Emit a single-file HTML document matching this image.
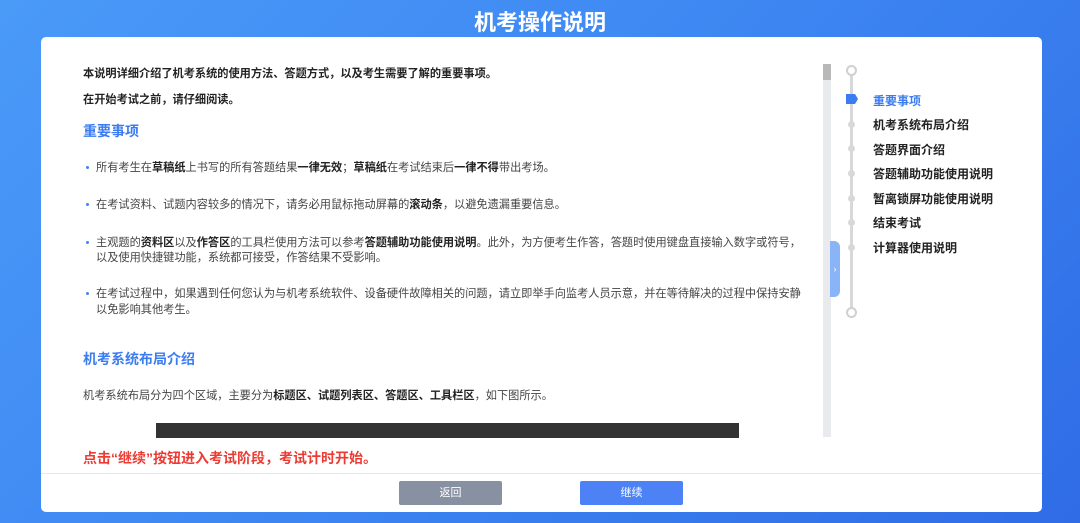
<!DOCTYPE html>
<html><head><meta charset="utf-8"><style>
*{margin:0;padding:0;box-sizing:border-box}
body{width:1080px;height:523px;overflow:hidden;position:relative;font-family:"Liberation Sans","Noto Sans CJK SC",sans-serif;background:linear-gradient(135deg,#4a9af8 0%,#3d86f2 50%,#2f6ce6 100%);}
.title{position:absolute;top:5px;left:0;width:1080px;text-align:center;color:#fff;font-size:22px;font-weight:bold}
.panel{position:absolute;left:41px;top:37px;width:1001px;height:475px;background:#fff;border-radius:5px}
.t{position:absolute;left:42px;font-size:11.2px;color:#444;white-space:nowrap}
.t b{color:#222}
.bd{font-weight:bold;color:#222;font-size:11.2px}
.h{color:#3b7cf0;font-size:14px;font-weight:bold}
.li::before{content:"";position:absolute;left:-10px;top:7px;width:3px;height:3px;border-radius:50%;background:#4a80f5}
.nav{position:absolute;left:832px;font-size:12px;font-weight:bold;color:#222}
.dot{position:absolute;left:807px;width:7px;height:7px;border-radius:50%;background:#d8d8d8}
.btn{position:absolute;top:444px;width:103px;height:24px;color:#fff;font-size:11px;text-align:center;line-height:24px;border-radius:2px}
</style></head><body>
<div class="title">机考操作说明</div>
<div class="panel">
<div class="t bd" style="top:28px">本说明详细介绍了机考系统的使用方法、答题方式，以及考生需要了解的重要事项。</div>
<div class="t bd" style="top:54px">在开始考试之前，请仔细阅读。</div>
<div class="t h" style="top:84px">重要事项</div>
<div class="t li" style="top:122px;left:55px">所有考生在<b>草稿纸</b>上书写的所有答题结果<b>一律无效</b>；<b>草稿纸</b>在考试结束后<b>一律不得</b>带出考场。</div>
<div class="t li" style="top:159px;left:55px">在考试资料、试题内容较多的情况下，请务必用鼠标拖动屏幕的<b>滚动条</b>，以避免遗漏重要信息。</div>
<div class="t li" style="top:197px;left:55px">主观题的<b>资料区</b>以及<b>作答区</b>的工具栏使用方法可以参考<b>答题辅助功能使用说明</b>。此外，为方便考生作答，答题时使用键盘直接输入数字或符号，</div>
<div class="t" style="top:212px;left:55px">以及使用快捷键功能，系统都可接受，作答结果不受影响。</div>
<div class="t li" style="top:248px;left:55px">在考试过程中，如果遇到任何您认为与机考系统软件、设备硬件故障相关的问题，请立即举手向监考人员示意，并在等待解决的过程中保持安静</div>
<div class="t" style="top:264px;left:55px">以免影响其他考生。</div>
<div class="t h" style="top:312px">机考系统布局介绍</div>
<div class="t" style="top:350px">机考系统布局分为四个区域，主要分为<b>标题区、试题列表区、答题区、工具栏区</b>，如下图所示。</div>
<div style="position:absolute;left:115px;top:386px;width:583px;height:15px;background:#333"></div>
<div class="t" style="top:411px;color:#ec3b32;font-size:14px;font-weight:bold">点击“继续”按钮进入考试阶段，考试计时开始。</div>
<div style="position:absolute;left:0;top:436px;width:1001px;height:1px;background:#e6e8ec"></div>
<div class="btn" style="left:358px;background:#8891a2">返回</div>
<div class="btn" style="left:539px;background:#4c82f5">继续</div>
<div style="position:absolute;left:782px;top:27px;width:8px;height:373px;background:#e8eaee"></div>
<div style="position:absolute;left:782px;top:27px;width:8px;height:16px;background:#b8b8b8"></div>
<div style="position:absolute;left:789px;top:204px;width:10px;height:56px;background:#8ab4f8;border-radius:0 6px 6px 0;color:#fff;font-size:9px;line-height:56px;text-align:center">›</div>
<div style="position:absolute;left:809px;top:38px;width:3px;height:232px;background:#d8d8d8"></div>
<div style="position:absolute;left:805px;top:28px;width:11px;height:11px;border-radius:50%;border:2px solid #d0d0d0;background:#fff"></div>
<div style="position:absolute;left:805px;top:270px;width:11px;height:11px;border-radius:50%;border:2px solid #d0d0d0;background:#fff"></div>
<div style="position:absolute;left:805px;top:57px;width:12px;height:10px;background:#3b7cf0;clip-path:polygon(0 0,75% 0,100% 50%,75% 100%,0 100%)"></div>
<div class="dot" style="top:84px"></div><div class="dot" style="top:108px"></div><div class="dot" style="top:133px"></div><div class="dot" style="top:158px"></div><div class="dot" style="top:182px"></div><div class="dot" style="top:207px"></div>
<div class="nav" style="top:55px;color:#3b7cf0">重要事项</div>
<div class="nav" style="top:79px">机考系统布局介绍</div>
<div class="nav" style="top:104px">答题界面介绍</div>
<div class="nav" style="top:128px">答题辅助功能使用说明</div>
<div class="nav" style="top:153px">暂离锁屏功能使用说明</div>
<div class="nav" style="top:177px">结束考试</div>
<div class="nav" style="top:202px">计算器使用说明</div>
</div>
</body></html>
